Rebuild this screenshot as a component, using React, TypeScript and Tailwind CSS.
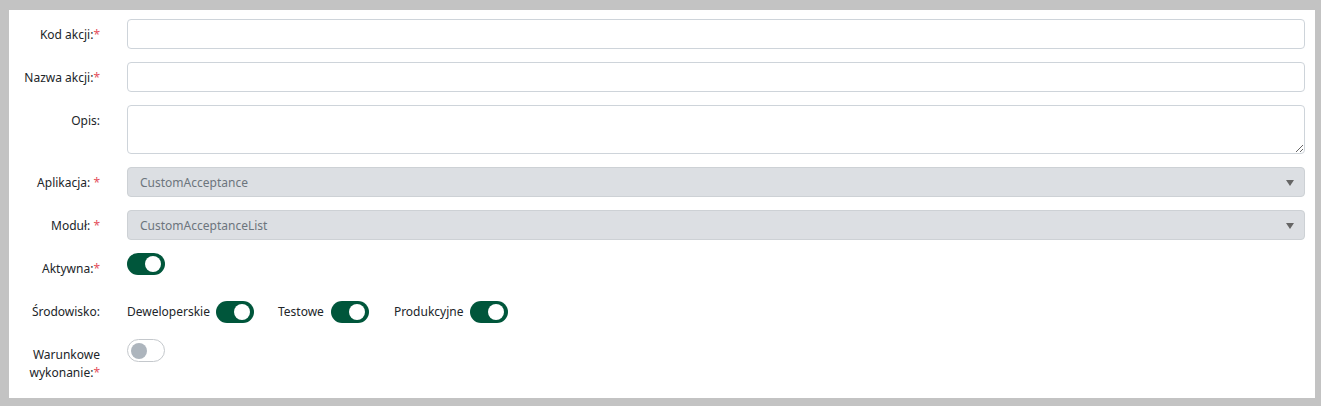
import { ReactNode } from "react";

const font = "font-['Noto_Sans',sans-serif]";

const Req = ({ space }: { space?: boolean }) => (
  <span className="text-[#e4505c]">{space ? " *" : "*"}</span>
);

const Row = ({
  label,
  children,
  center,
}: {
  label: ReactNode;
  children: ReactNode;
  center?: boolean;
}) => (
  <div className="flex min-h-[30px] mb-[13px] last:mb-0">
    <label className="w-[91px] shrink-0 pt-[7px] text-right leading-[18px] text-[#212529]">
      {label}
    </label>
    <div className={`ml-[27px] flex-1 ${center ? "flex items-center h-[30px] pt-[1px]" : ""}`}>
      {children}
    </div>
  </div>
);

const Toggle = ({ on }: { on: boolean }) =>
  on ? (
    <span className="relative inline-block w-[38px] h-[22px] rounded-full bg-[#00563b] shrink-0 align-middle">
      <span className="absolute top-[3px] right-[4px] w-[16px] h-[16px] rounded-full bg-white" />
    </span>
  ) : (
    <span className="relative inline-block w-[38px] h-[23px] rounded-full border border-[#c4c8cc] bg-white shrink-0 align-middle">
      <span className="absolute top-[3px] left-[3px] w-[16px] h-[16px] rounded-full bg-[#adb5bd]" />
    </span>
  );

const Select = ({ value }: { value: string }) => (
  <div className="relative h-[30px] rounded-[4px] border border-[#cdd1d5] bg-[#dcdfe3] flex items-center pl-[12px] pt-[2px] text-[#6c757d]">
    {value}
    <span className="absolute right-[10px] top-[12px] w-0 h-0 border-l-[4px] border-r-[4px] border-t-[6px] border-l-transparent border-r-transparent border-t-[#666]" />
  </div>
);

const inputCls =
  "block w-full h-[30px] rounded-[4px] border border-[#ced4da] bg-white px-[12px] outline-none";

export default function App() {
  return (
    <div className={`h-[406px] bg-[#c3c3c3] pt-[10px] pl-[9px] pr-[6px] pb-[8px] text-[12px] ${font}`}>
      <div className="h-full bg-white pt-[9px] pr-[10px]">
        <Row label={<>Kod akcji:<Req /></>}>
          <input className={inputCls} />
        </Row>
        <Row label={<>Nazwa akcji:<Req /></>}>
          <input className={inputCls} />
        </Row>
        <Row label="Opis:">
          <textarea className="block w-full h-[49px] rounded-[4px] border border-[#ced4da] bg-white px-[12px] py-[6px] outline-none" />
        </Row>
        <Row label={<>Aplikacja:<Req space /></>}>
          <Select value="CustomAcceptance" />
        </Row>
        <Row label={<>Moduł:<Req space /></>}>
          <Select value="CustomAcceptanceList" />
        </Row>
        <Row label={<>Aktywna:<Req /></>}>
          <Toggle on />
        </Row>
        <Row label="Środowisko:" center>
          <span className="text-[#212529]">Deweloperskie</span>
          <span className="ml-[6px] flex">
            <Toggle on />
          </span>
          <span className="ml-[24px] text-[#212529]">Testowe</span>
          <span className="ml-[7px] flex">
            <Toggle on />
          </span>
          <span className="ml-[25px] text-[#212529]">Produkcyjne</span>
          <span className="ml-[7px] flex">
            <Toggle on />
          </span>
        </Row>
        <Row label={<>Warunkowe wykonanie:<Req /></>}>
          <Toggle on={false} />
        </Row>
      </div>
    </div>
  );
}
